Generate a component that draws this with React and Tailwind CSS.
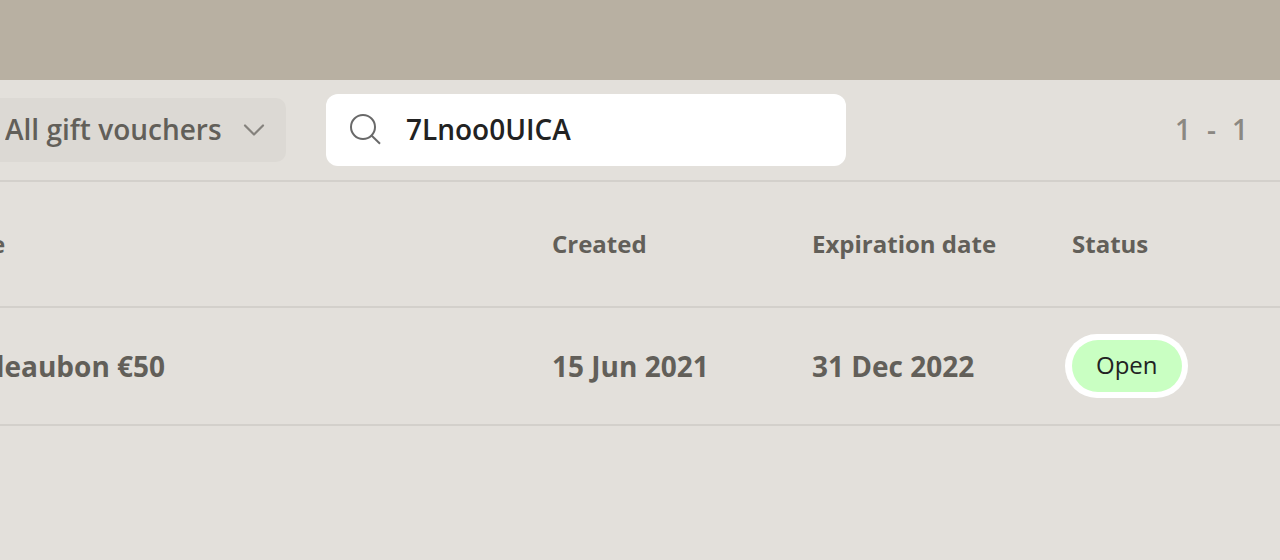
import { useState } from "react";

const vouchers = [
  { title: "Cadeaubon €50", created: "15 Jun 2021", expires: "31 Dec 2022", status: "Open" },
];

function SearchIcon() {
  return (
    <svg viewBox="0 0 34 34" className="size-[34px] shrink-0" fill="none" stroke="#696969" strokeWidth="2" aria-hidden="true">
      <circle cx="15" cy="15" r="12" />
      <path d="M23.5 23.5 32 31.8" />
    </svg>
  );
}

function ChevronIcon() {
  return (
    <svg viewBox="0 0 24 24" className="pointer-events-none absolute top-5 right-5 size-6" fill="none" stroke="#85827d" strokeWidth="2.2" strokeLinecap="round" strokeLinejoin="round" aria-hidden="true">
      <path d="M3 7.5 12 16.5 21 7.5" />
    </svg>
  );
}

function Toolbar() {
  const [query, setQuery] = useState("7Lnoo0UICA");
  return (
    <div className="flex items-center gap-10 border-b-2 border-[#d3d0cb] py-3.5 pr-8 text-[28px] font-semibold">
      <div className="relative -ml-6">
        <select
          aria-label="Filter vouchers"
          className="h-16 w-[310px] cursor-pointer appearance-none rounded-[10px] bg-[#dcd9d4] pb-0.5 pl-[29px] text-[#625f59] outline-none"
        >
          <option>All gift vouchers</option>
        </select>
        <ChevronIcon />
      </div>
      <label className="flex h-[72px] w-[520px] items-center gap-6 rounded-xl bg-white pr-6 pb-0.5 pl-[22px]">
        <SearchIcon />
        <input
          type="text"
          aria-label="Search"
          value={query}
          onChange={(e) => setQuery(e.target.value)}
          className="min-w-0 flex-1 bg-transparent text-[#222222] outline-none"
        />
      </label>
      <div className="ml-auto flex gap-4 pb-0.5 text-[#8b8882]">
        <span>1</span>
        <span>-</span>
        <span>1</span>
      </div>
    </div>
  );
}

function StatusBadge({ children }) {
  return (
    <span className="-ml-[7px] inline-block rounded-full bg-white py-1.5 pr-1.5 pl-[7px] align-middle">
      <span className="block rounded-full bg-[#c9ffc2] px-6 pb-0.5 text-2xl leading-[50px] font-normal text-[#222222]">
        {children}
      </span>
    </span>
  );
}

function VoucherTable() {
  return (
    <div className="-ml-12">
      <table className="w-full table-fixed border-separate border-spacing-0 text-left font-bold text-[#625f59] [&_td]:border-b-2 [&_td]:border-[#d3d0cb] [&_td]:p-0 [&_th]:border-b-2 [&_th]:border-[#d3d0cb] [&_th]:p-0">
        <thead>
          <tr className="h-[126px] text-2xl">
            <th>Title</th>
            <th className="w-[260px]">Created</th>
            <th className="w-[260px]">Expiration date</th>
            <th className="w-[208px]">Status</th>
          </tr>
        </thead>
        <tbody className="text-[28px]">
          {vouchers.map((v) => (
            <tr key={v.title} className="h-[118px]">
              <td>{v.title}</td>
              <td>{v.created}</td>
              <td>{v.expires}</td>
              <td>
                <StatusBadge>{v.status}</StatusBadge>
              </td>
            </tr>
          ))}
        </tbody>
      </table>
    </div>
  );
}

export default function App() {
  return (
    <div className="min-h-screen overflow-hidden bg-[#e3e0db] font-['Open_Sans',sans-serif]">
      <header className="h-20 bg-[#b8b0a2]" />
      <main>
        <Toolbar />
        <VoucherTable />
      </main>
    </div>
  );
}
